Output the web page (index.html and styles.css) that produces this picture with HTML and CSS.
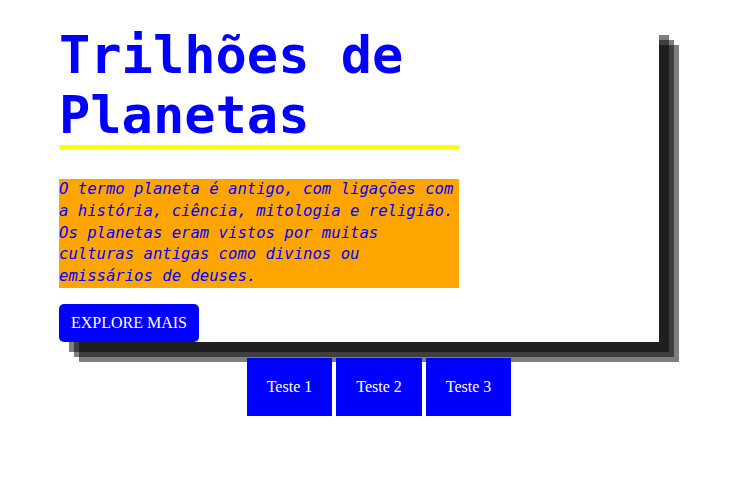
FILE: index.html
```html
<!DOCTYPE html>
<html lang="pt">
<head>
<meta charset="utf-8">
<title>Trilhões de Planetas</title>
<link rel="stylesheet" href="styles.css">
</head>
<body>
<section class="hero">
  <h1 class="hero-title">Trilhões de Planetas</h1>
  <p class="hero-text">O termo planeta é antigo, com ligações com a história, ciência, mitologia e religião. Os planetas eram vistos por muitas culturas antigas como divinos ou emissários de deuses.</p>
  <button class="hero-button">EXPLORE MAIS</button>
</section>
<nav class="tabs">
  <a class="tab" href="#">Teste 1</a>
  <a class="tab" href="#">Teste 2</a>
  <a class="tab" href="#">Teste 3</a>
</nav>
</body>
</html>
```

FILE: styles.css
```css
html, body {
  background: #ffffff;
}
body {
  margin: 0;
  font-family: "Liberation Serif", "Times New Roman", serif;
}
.hero {
  width: 600px;
  margin: 25px 0 0 59px;
  background: #ffffff;
  box-shadow:
    10px 10px 0 rgba(0, 0, 0, 0.5),
    15px 15px 0 rgba(0, 0, 0, 0.5),
    20px 20px 0 rgba(0, 0, 0, 0.5);
}
.hero-title {
  width: 400px;
  margin: 0;
  font-family: "DejaVu Sans Mono", monospace;
  font-weight: bold;
  font-size: 52px;
  line-height: 60px;
  color: #0000ff;
  border-bottom: 4px solid #ffff00;
}
.hero-text {
  width: 400px;
  margin: 30px 0 0 0;
  font-family: "DejaVu Sans Mono", monospace;
  font-style: italic;
  font-size: 15.6px;
  line-height: 21.8px;
  color: #0000ff;
  background: #ffa500;
}
.hero-button {
  display: block;
  margin-top: 16px;
  padding: 10px 12px;
  border: none;
  border-radius: 5px;
  background: #0000ff;
  color: #ffffff;
  font-family: "Liberation Serif", "Times New Roman", serif;
  font-size: 16px;
  line-height: 18px;
}
.tabs {
  display: flex;
  justify-content: center;
  gap: 4px;
  margin-top: 16px;
  padding-left: 8px;
}
.tab {
  padding: 20px;
  background: #0000ff;
  color: #ffffff;
  text-decoration: none;
  font-size: 16px;
  line-height: 18px;
}
```
